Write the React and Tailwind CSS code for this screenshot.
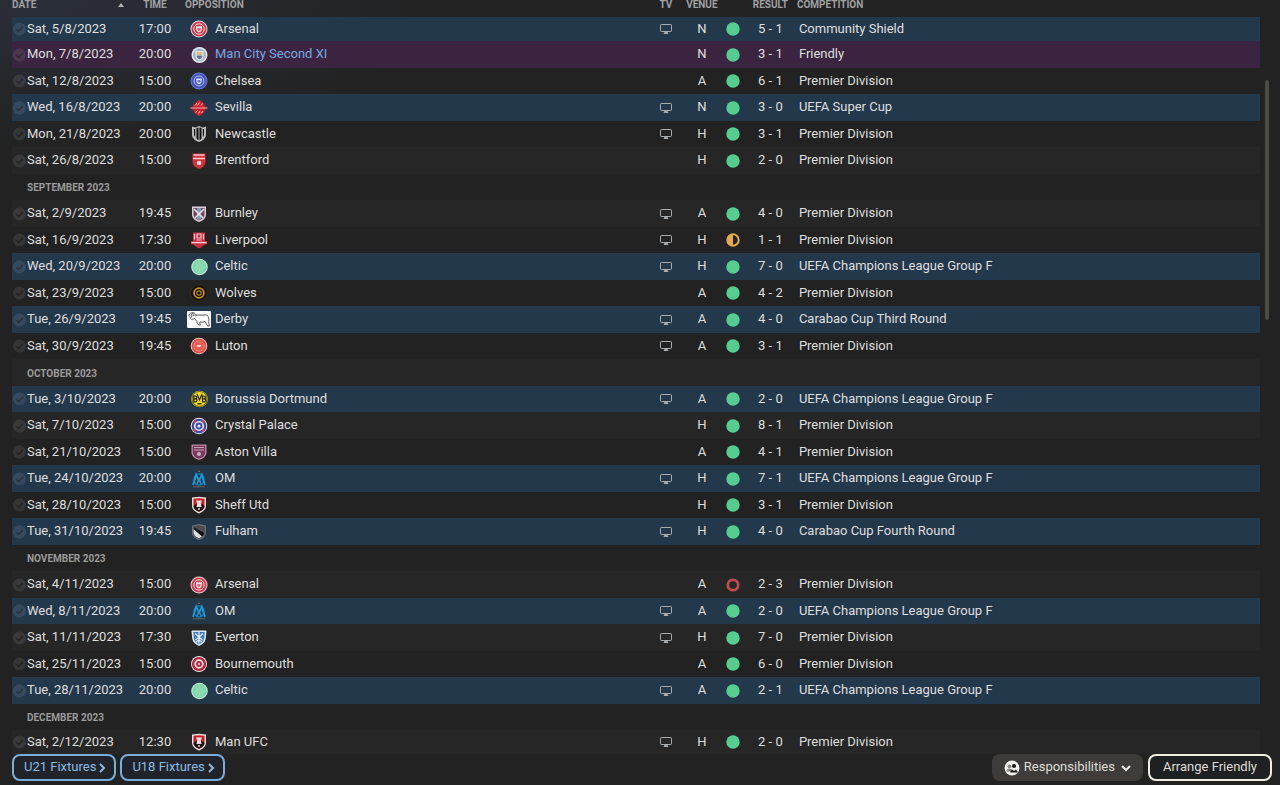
import React from 'react';
import clsx from 'clsx';

const C = 'Premier Division';
const UCL = 'UEFA Champions League Group F';

const rows = [
  { date: 'Sat, 5/8/2023', time: '17:00', team: 'Arsenal', crest: 'arsenal', tv: true, venue: 'N', score: '5 - 1', comp: 'Community Shield', kind: 'cup' },
  { date: 'Mon, 7/8/2023', time: '20:00', team: 'Man City Second XI', crest: 'mancity', venue: 'N', score: '3 - 1', comp: 'Friendly', kind: 'friendly' },
  { date: 'Sat, 12/8/2023', time: '15:00', team: 'Chelsea', crest: 'chelsea', venue: 'A', score: '6 - 1', comp: C },
  { date: 'Wed, 16/8/2023', time: '20:00', team: 'Sevilla', crest: 'sevilla', tv: true, venue: 'N', score: '3 - 0', comp: 'UEFA Super Cup', kind: 'cup' },
  { date: 'Mon, 21/8/2023', time: '20:00', team: 'Newcastle', crest: 'newcastle', tv: true, venue: 'H', score: '3 - 1', comp: C },
  { date: 'Sat, 26/8/2023', time: '15:00', team: 'Brentford', crest: 'brentford', venue: 'H', score: '2 - 0', comp: C },
  { month: 'SEPTEMBER 2023' },
  { date: 'Sat, 2/9/2023', time: '19:45', team: 'Burnley', crest: 'burnley', tv: true, venue: 'A', score: '4 - 0', comp: C },
  { date: 'Sat, 16/9/2023', time: '17:30', team: 'Liverpool', crest: 'liverpool', tv: true, venue: 'H', score: '1 - 1', comp: C, outcome: 'draw' },
  { date: 'Wed, 20/9/2023', time: '20:00', team: 'Celtic', crest: 'celtic', tv: true, venue: 'H', score: '7 - 0', comp: UCL, kind: 'cup' },
  { date: 'Sat, 23/9/2023', time: '15:00', team: 'Wolves', crest: 'wolves', venue: 'A', score: '4 - 2', comp: C },
  { date: 'Tue, 26/9/2023', time: '19:45', team: 'Derby', crest: 'derby', tv: true, venue: 'A', score: '4 - 0', comp: 'Carabao Cup Third Round', kind: 'cup' },
  { date: 'Sat, 30/9/2023', time: '19:45', team: 'Luton', crest: 'luton', tv: true, venue: 'A', score: '3 - 1', comp: C },
  { month: 'OCTOBER 2023' },
  { date: 'Tue, 3/10/2023', time: '20:00', team: 'Borussia Dortmund', crest: 'dortmund', tv: true, venue: 'A', score: '2 - 0', comp: UCL, kind: 'cup' },
  { date: 'Sat, 7/10/2023', time: '15:00', team: 'Crystal Palace', crest: 'palace', venue: 'H', score: '8 - 1', comp: C },
  { date: 'Sat, 21/10/2023', time: '15:00', team: 'Aston Villa', crest: 'villa', venue: 'A', score: '4 - 1', comp: C },
  { date: 'Tue, 24/10/2023', time: '20:00', team: 'OM', crest: 'om', tv: true, venue: 'H', score: '7 - 1', comp: UCL, kind: 'cup' },
  { date: 'Sat, 28/10/2023', time: '15:00', team: 'Sheff Utd', crest: 'redshield', venue: 'H', score: '3 - 1', comp: C },
  { date: 'Tue, 31/10/2023', time: '19:45', team: 'Fulham', crest: 'fulham', tv: true, venue: 'H', score: '4 - 0', comp: 'Carabao Cup Fourth Round', kind: 'cup' },
  { month: 'NOVEMBER 2023' },
  { date: 'Sat, 4/11/2023', time: '15:00', team: 'Arsenal', crest: 'arsenal', venue: 'A', score: '2 - 3', comp: C, outcome: 'loss' },
  { date: 'Wed, 8/11/2023', time: '20:00', team: 'OM', crest: 'om', tv: true, venue: 'A', score: '2 - 0', comp: UCL, kind: 'cup' },
  { date: 'Sat, 11/11/2023', time: '17:30', team: 'Everton', crest: 'everton', tv: true, venue: 'H', score: '7 - 0', comp: C },
  { date: 'Sat, 25/11/2023', time: '15:00', team: 'Bournemouth', crest: 'bournemouth', venue: 'A', score: '6 - 0', comp: C },
  { date: 'Tue, 28/11/2023', time: '20:00', team: 'Celtic', crest: 'celtic', tv: true, venue: 'A', score: '2 - 1', comp: UCL, kind: 'cup' },
  { month: 'DECEMBER 2023' },
  { date: 'Sat, 2/12/2023', time: '12:30', team: 'Man UFC', crest: 'redshield', tv: true, venue: 'H', score: '2 - 0', comp: C },
];

const shield = 'M2.5 1.5h13v8c0 4-3 6-6.5 7.500C5.500 15.500 2.500 13.500 2.500 9.500z';

const crests = {
  arsenal: (
    <>
      <circle cx="9" cy="9" r="8.5" fill="#f0d9dc" />
      <circle cx="9" cy="9" r="7.600" fill="#d23a4c" />
      <circle cx="9" cy="9" r="5.200" fill="none" stroke="#f3dfe1" strokeWidth="1" />
      <path d="M6 6.300h6v2.700c0 1.700-1.300 2.800-3 3.500-1.700-.7-3-1.800-3-3.500z" fill="#f3dfe1" />
      <path d="M7.200 8.200h3.600v1L9 11.200 7.200 9.500z" fill="#d95a69" />
    </>
  ),
  mancity: (
    <>
      <circle cx="9.500" cy="9" r="8" fill="#e3ebf2" />
      <circle cx="9.500" cy="9" r="6.500" fill="#9fb4cc" />
      <path d="M5.500 5h8v5c0 2.500-2 3.800-4 4.500-2-.7-4-2-4-4.500z" fill="#eceef0" />
      <path d="M6.500 5.800h6v3.400h-6z" fill="#d9c07a" />
      <path d="M6.500 9.500h6c0 2.300-1.500 3.200-3 3.800-1.500-.6-3-1.500-3-3.800z" fill="#5f6f9c" />
    </>
  ),
  chelsea: (
    <>
      <circle cx="9" cy="9" r="8.500" fill="#6f7fda" />
      <circle cx="9" cy="9" r="7.600" fill="#4353bd" />
      <circle cx="9" cy="9" r="5" fill="none" stroke="#b9c2ee" strokeWidth="1" />
      <path d="M6.300 6.500h5.400v2.500c0 1.600-1.200 2.600-2.700 3.200-1.500-.6-2.700-1.600-2.700-3.200z" fill="#dde2f7" />
      <path d="M7.500 8.200h3v1l-1.500 1.500L7.500 9.200z" fill="#4f5fc4" />
    </>
  ),
  sevilla: (
    <>
      <path d="M9 .8 13.500 4l2.500 5-2.500 5L9 17.200 4.500 14 2 9l2.500-5z" fill="#d3232f" />
      <path d="M5 6.500 7 4M7.500 6.500l2-3M11 6.500l1.500-2M5.500 13.500l2-2M8.500 14.500l1.500-2.500M11.500 14l1.500-2" stroke="#f3c9cb" strokeWidth=".9" />
      <path d="M1 8.200h16M1 9.900h16" stroke="#b71c28" strokeWidth=".8" />
      <path d="M.5 9h17" stroke="#f0c3c6" strokeWidth=".9" />
    </>
  ),
  newcastle: (
    <>
      <path d="M2 1.500 5 2.500 9 1l4 1.500 3-1v8c0 4-3.500 6.500-7 7.500-3.500-1-7-3.500-7-7.500z" fill="#b9b9b9" />
      <path d="M4 4h1.200v8L4 10zM6.500 2.800h2v12.500l-2-1.500zM9.500 2.800h2v11l-2 1.500zM12.800 4H14v6l-1.200 2z" fill="#101010" />
    </>
  ),
  brentford: (
    <>
      <path d={shield} fill="#d3303c" />
      <path d="M3.500 3h11M3 6.500h12" stroke="#f3c6c8" strokeWidth="1.300" />
      <circle cx="9" cy="11" r="2.300" fill="#f8d9da" />
    </>
  ),
  burnley: (
    <>
      <path d="M2 1.500h14v8c0 4-3.500 6.500-7 7.500-3.500-1-7-3.500-7-7.500z" fill="#d9cfd8" />
      <path d="M3.500 3h11v6.500c0 3-2.700 5-5.500 6-2.800-1-5.500-3-5.500-6z" fill="#7a4560" />
      <path d="M7 3h4v11l-2 1-2-1z" fill="#7ba0c4" />
      <path d="m4 4 9 9M14 4l-9 9" stroke="#ecebf0" strokeWidth="1.500" />
    </>
  ),
  liverpool: (
    <>
      <path d="M3 1.500h12v8.500h2v3.500h-2.500C13 15.500 11 16.500 9 17.300 7 16.500 5 15.500 3.500 13.500H1V10h2z" fill="#cc2f40" />
      <path d="M4.500 3v5.500M13.500 3v5.500M6.500 9h5M7 3h4v4H7z" fill="none" stroke="#efc5c9" strokeWidth="1.200" />
      <path d="M1.500 11.600h15" stroke="#f3d5d8" strokeWidth="1.300" />
    </>
  ),
  celtic: (
    <>
      <circle cx="9.500" cy="9" r="8.300" fill="#bfe9d2" />
      <circle cx="9.500" cy="9" r="7.200" fill="#7fd6aa" />
      <path d="M9.500 3.500v11M4 9h11M6 5.500l7 7M13 5.500l-7 7" stroke="#9bdfbd" strokeWidth="1.200" />
      <circle cx="9.500" cy="9" r="2" fill="#8bd9b0" />
    </>
  ),
  wolves: (
    <>
      <circle cx="9" cy="9" r="8.300" fill="#15120b" stroke="#4a3914" strokeWidth=".6" />
      <circle cx="9" cy="9" r="4.900" fill="none" stroke="#c8931c" strokeWidth="1.800" />
      <circle cx="9" cy="9" r="2.200" fill="none" stroke="#b98818" strokeWidth="1.200" />
    </>
  ),
  luton: (
    <>
      <circle cx="9" cy="9" r="8.300" fill="#f4c1bd" />
      <circle cx="9" cy="9" r="7.300" fill="#e2483f" />
      <circle cx="9" cy="9" r="5.200" fill="#ec5b50" stroke="#f39b94" strokeWidth=".7" />
      <path d="M6.500 8h5l-1 2h-3z" fill="#f9d4d0" />
    </>
  ),
  dortmund: (
    <>
      <circle cx="9.500" cy="9" r="8.300" fill="#f2dc1d" />
      <circle cx="9.500" cy="9" r="7.500" fill="none" stroke="#2b2908" strokeWidth=".7" />
      <path d="M3.800 6h1.500a1.300 1.300 0 0 1 0 2.800H3.800zm0 2.800h1.700a1.400 1.400 0 0 1 0 3H3.800zM7 4l2.500 6L12 4M12.500 6H14a1.300 1.300 0 0 1 0 2.800h-1.500zm0 2.800h1.700a1.400 1.400 0 0 1 0 3h-1.700z" fill="none" stroke="#211f06" strokeWidth="1.200" />
      <path d="M7.500 13.800h4" stroke="#211f06" strokeWidth="1.400" />
    </>
  ),
  palace: (
    <>
      <circle cx="9" cy="9" r="8.300" fill="#e4e6f4" />
      <circle cx="9" cy="9" r="6.200" fill="none" stroke="#3c49a8" strokeWidth="2.200" />
      <path d="M3.700 5.500A6.200 6.200 0 0 1 6 3.500M12 3.500a6.200 6.200 0 0 1 2.300 2M3.700 12.500A6.200 6.200 0 0 0 6 14.500M12 14.500a6.200 6.200 0 0 0 2.300-2" fill="none" stroke="#c8455e" strokeWidth="2" />
      <circle cx="9" cy="9" r="3.400" fill="#3a49b0" />
      <circle cx="9" cy="9" r="1.600" fill="#e8eaf6" />
    </>
  ),
  villa: (
    <>
      <path d="M1.500 1.500h15v8c0 4-4 6.500-7.500 7.500-3.500-1-7.500-3.500-7.500-7.500z" fill="#b98aa6" />
      <path d="M2.800 2.800h12.400v6.700c0 3-3 5.300-6.200 6.200-3.200-.9-6.200-3.200-6.200-6.200z" fill="#7b3a5c" />
      <path d="M4 4.500h10M4 7h10" stroke="#c79db4" strokeWidth="1.200" />
      <circle cx="9" cy="11" r="2" fill="#cfa9bd" />
    </>
  ),
  om: (
    <>
      <ellipse cx="9" cy="9.500" rx="5" ry="5.500" fill="none" stroke="#1279b0" strokeWidth="1.500" />
      <path d="M3 15 6.200 4.500 9 11l2.800-6.500L15 15" fill="none" stroke="#1b9ad8" strokeWidth="1.800" />
      <path d="M6.800 14.500 9 8.500l2.200 6" fill="none" stroke="#1b9ad8" strokeWidth="1.200" />
      <path d="M9 .2 9.900 2H8.100z" fill="#a58b4d" />
      <path d="M3 16.800h12" stroke="#6f6750" strokeWidth=".9" />
    </>
  ),
  redshield: (
    <>
      <path d="M2 1.500 9 .8l7 .7v8.500c0 3.500-3.500 6-7 7.500-3.500-1.500-7-4-7-7.500z" fill="#ecdcdc" />
      <path d="M3.500 2.800 9 2.200l5.500.6v7c0 2.800-2.700 4.700-5.500 6-2.800-1.300-5.500-3.200-5.500-6z" fill="#c5202e" />
      <path d="M3.500 10 6 8l3 2 3-2 2.500 2c0 2.800-2.700 4.600-5.500 5.800C6.200 14.600 3.500 12.800 3.500 10z" fill="#1d1416" />
      <path d="M6.500 4h1v1h1V4h1v1h1V4h1v2.500l-.7.500.7 4h-5l.7-4-.7-.5z" fill="#f1dddd" />
      <circle cx="9" cy="13" r="1" fill="#e9d9d9" />
    </>
  ),
  fulham: (
    <>
      <path d="M2 2.500 9 1l7 1.500v7c0 4-3.500 6.500-7 7.500-3.500-1-7-3.500-7-7.500z" fill="#6a6e71" />
      <path d="M3.300 3.500 9 2.300l5.700 1.200v6c0 3-2.900 5-5.700 6-2.800-1-5.700-3-5.700-6z" fill="#4a4e51" />
      <path d="M4 4.500 14.300 10c-.6 2.500-2.800 4.300-5.300 5.300-2.800-1-5.500-3-5.500-6z" fill="#101112" />
      <path d="M3.500 6 12 13.500c-.9.700-1.900 1.400-3 1.800-2.800-1-5.500-3-5.500-6z" fill="#dededc" />
    </>
  ),
  everton: (
    <>
      <path d="M2 1.500h14l.5 1-.8 7.500c-.7 3.500-3.500 5.700-6.700 7-3.200-1.300-6-3.500-6.700-7L1.500 2.500z" fill="#d9e6f5" />
      <path d="M3.200 3h11.600l-.7 6.500c-.5 2.800-2.600 4.700-5.100 5.900-2.500-1.200-4.600-3.100-5.100-5.900z" fill="#3f7cc4" />
      <path d="M9 3v11.500M5 4.500l4 3.500 4-3.500M5.500 11 9 8l3.500 3M6 13l3-2 3 2" fill="none" stroke="#e4eef9" strokeWidth="1.200" />
    </>
  ),
  bournemouth: (
    <>
      <circle cx="9" cy="9" r="8" fill="#f0dfe2" />
      <circle cx="9" cy="9" r="5.900" fill="none" stroke="#b3263f" strokeWidth="2.400" />
      <circle cx="9" cy="9" r="2.900" fill="#b3263f" />
      <circle cx="9" cy="9" r="1" fill="#f3e6e8" />
    </>
  ),
};

const Crest = ({ name }) => {
  if (name === 'derby') {
    return (
      <svg viewBox="0 0 24 17" className="w-6 h-[17px] shrink-0" aria-hidden="true">
        <rect width="24" height="17" rx="1" fill="#fbfbfb" />
        <path
          d="M9 4.300c3-1 5 .3 8-.3 2.500-.5 4.300.5 4.700 2.800.5 2.700-.4 4.500.6 8.200h-1.600l-2.700-4.600c-1.500.9-3 1-5 .4-.5 1-.2 2 .6 3.200h-2c-1-1.200-1.500-2-1.700-3.800C9 9.200 8.300 8.300 7.700 7.500L4.500 8.500 3.500 7.300l1.200-2"
          fill="none"
          stroke="#4a4a4a"
          strokeWidth=".9"
        />
        <path d="M8.800 5.300A2.300 2.300 0 1 0 4.700 5.500M6.500 1.800C4.300 1.400 2.500 2.300 2 4.200c-.2 1 .2 1.800.8 2.200" fill="none" stroke="#444" strokeWidth=".9" />
        <circle cx="6.500" cy="4.300" r="1" fill="#666" />
      </svg>
    );
  }
  return (
    <span className="w-6 flex justify-center shrink-0">
      <svg viewBox="0 0 18 18" className="w-[18px] h-[18px]" aria-hidden="true">
        {crests[name]}
      </svg>
    </span>
  );
};

const Tick = () => (
  <svg viewBox="0 0 14 14" className="w-[14px] h-[14px] shrink-0" aria-hidden="true">
    <circle cx="7.500" cy="7" r="6.500" fill="#ffffff" fillOpacity=".09" />
    <path d="m4.500 7.300 2.200 2.200L10.700 5" fill="none" stroke="#000000" strokeOpacity=".35" strokeWidth="1.500" />
  </svg>
);

const Screen = () => (
  <svg viewBox="0 0 12 10" className="w-3 h-[10px] mx-auto" role="img" aria-label="Televised">
    <rect x=".5" y=".5" width="11" height="7" rx=".8" fill="none" stroke="#a9adb0" />
    <path d="M4.500 8h3l1 2h-5z" fill="#a9adb0" />
  </svg>
);

// Filled = win, half = draw, ring = loss
const Outcome = ({ type = 'win' }) => (
  <svg viewBox="0 0 14 14" className="w-[14px] h-[14px] mx-auto" role="img" aria-label={type}>
    {type === 'win' && <circle cx="7" cy="7" r="6.700" fill="#56cd90" />}
    {type === 'draw' && (
      <>
        <circle cx="7" cy="7" r="5.700" fill="none" stroke="#e3a94f" strokeWidth="2" />
        <path d="M7 1a6 6 0 0 0 0 12z" fill="#e3a94f" />
      </>
    )}
    {type === 'loss' && <circle cx="7" cy="7" r="5.200" fill="none" stroke="#bf4a4c" strokeWidth="2.800" />}
  </svg>
);

const rowHeight = (i) => {
  if (i === 0 || i === rows.length - 1) return 'h-6';
  return i % 2 ? 'h-[27px]' : 'h-[26px]';
};

const headCell = 'p-0 align-top font-bold text-[10px] leading-[9px] text-[#a0a1a3]';

const FixturesTable = () => (
  <table className="flex-1 w-full table-fixed border-collapse">
    <colgroup>
      <col className="w-[113px]" />
      <col className="w-[60px]" />
      <col className="w-[37.25%]" />
      <col className="w-8" />
      <col className="w-10" />
      <col className="w-[22px]" />
      <col className="w-[53px]" />
      <col />
    </colgroup>
    <thead>
      <tr className="h-[17px]">
        <th className={clsx(headCell, 'text-left')}>
          <button className="w-full flex items-center justify-between">
            DATE
            <svg viewBox="0 0 6 4" className="w-[6px] h-1 mr-[1px]" aria-hidden="true">
              <path d="M3 0 6 4H0z" fill="#b5b5b5" />
            </svg>
          </button>
        </th>
        <th className={clsx(headCell, 'text-center')}>TIME</th>
        <th className={clsx(headCell, 'text-left')}>OPPOSITION</th>
        <th className={clsx(headCell, 'text-center')}>TV</th>
        <th className={clsx(headCell, 'text-center')}>VENUE</th>
        <th className={headCell} aria-label="Outcome" />
        <th className={clsx(headCell, 'text-center')}>RESULT</th>
        <th className={clsx(headCell, 'text-left')}>COMPETITION</th>
      </tr>
    </thead>
    <tbody className="text-[13px] leading-4 text-[#dfdfde]">
      {rows.map((row, i) => {
        if (row.month) {
          return (
            <tr key={row.month} className={clsx(rowHeight(i), 'even:bg-white/2')}>
              <th colSpan={8} className="p-0 pt-[2px] pl-[15px] text-left text-[10px] font-bold text-[#9b9b9a]">
                {row.month}
              </th>
            </tr>
          );
        }
        return (
          <tr
            key={row.date}
            className={clsx(
              rowHeight(i),
              row.kind === 'cup' && 'bg-[#24384c]',
              row.kind === 'friendly' && 'bg-[#3b2440]',
              !row.kind && 'even:bg-white/2'
            )}
          >
            <td className="p-0">
              <div className="flex items-center gap-px whitespace-nowrap">
                <Tick />
                <span className="pb-px">{row.date}</span>
              </div>
            </td>
            <td className="p-0 pb-px text-center">{row.time}</td>
            <td className="p-0 pl-[2px]">
              <div className="flex items-center gap-1 whitespace-nowrap">
                <Crest name={row.crest} />
                <span className={clsx('pb-px', row.kind === 'friendly' && 'text-[#74a9e0]')}>{row.team}</span>
              </div>
            </td>
            <td className="p-0">{row.tv && <Screen />}</td>
            <td className="p-0 pb-px text-center">{row.venue}</td>
            <td className="p-0">
              <Outcome type={row.outcome} />
            </td>
            <td className="p-0 pb-px text-center">{row.score}</td>
            <td className="p-0 pl-[2px] pb-px whitespace-nowrap">{row.comp}</td>
          </tr>
        );
      })}
    </tbody>
  </table>
);

const FixturesButton = ({ children }) => (
  <button className="h-[27px] pl-[10px] pr-2 pb-[2px] flex items-center gap-[3px] rounded-lg border-2 border-[#78aedb] bg-[#20242a] text-[#8bbbe4]">
    {children}
    <svg viewBox="0 0 7 10" className="w-[7px] h-[10px] mt-[2px]" aria-hidden="true">
      <path d="m1 1 4 4-4 4" fill="none" stroke="currentColor" strokeWidth="2" />
    </svg>
  </button>
);

const Footer = () => (
  <footer className="flex items-center justify-between pl-3 pr-2 pb-1 text-[13px] leading-4">
    <div className="flex gap-1">
      <FixturesButton>U21 Fixtures</FixturesButton>
      <FixturesButton>U18 Fixtures</FixturesButton>
    </div>
    <div className="flex gap-[5px]">
      <button className="h-[27px] px-3 pb-[2px] flex items-center gap-1 rounded-lg bg-[#3d3c3b] text-[#dfdcd6]">
        <svg viewBox="0 0 16 16" className="w-4 h-4 mt-[2px]" aria-hidden="true">
          <circle cx="8" cy="8" r="7.500" fill="#f3f0e8" />
          <circle cx="5.500" cy="6.300" r="1.900" fill="#8a8782" />
          <path d="M2.500 11.500c0-2 1.200-3 3-3s3 1 3 3z" fill="#8a8782" />
          <circle cx="10" cy="6" r="2.100" fill="#1b1b1b" />
          <path d="M6.300 12.500c0-1.500.7-2.300 2-2.700l1.700 1.200 1.700-1.200c1.300.4 2 1.200 2 2.700z" fill="#1b1b1b" />
        </svg>
        Responsibilities
        <svg viewBox="0 0 10 7" className="w-[10px] h-[7px] ml-[2px] mt-1" aria-hidden="true">
          <path d="m1 1 4 4 4-4" fill="none" stroke="#f0ede6" strokeWidth="2" />
        </svg>
      </button>
      <button className="h-[27px] px-3 pb-[2px] flex items-center rounded-lg border-2 border-[#efece4] bg-[#1f2021] text-[#dfdcd6]">
        <span className="px-px">Arrange Friendly</span>
      </button>
    </div>
  </footer>
);

const App = () => (
  <div className="min-h-screen flex flex-col bg-[#222222] bg-[radial-gradient(ellipse_400px_150px_at_40px_0px,#2a2e38,#222222)] font-['Roboto',sans-serif]">
    <main className="flex pl-3">
      <FixturesTable />
      {/* Scrollbar */}
      <div className="w-5 shrink-0 pl-[5px] pt-20">
        <div className="w-1 h-60 rounded-full bg-[#4b4b4a]" />
      </div>
    </main>
    <Footer />
  </div>
);

export default App;
